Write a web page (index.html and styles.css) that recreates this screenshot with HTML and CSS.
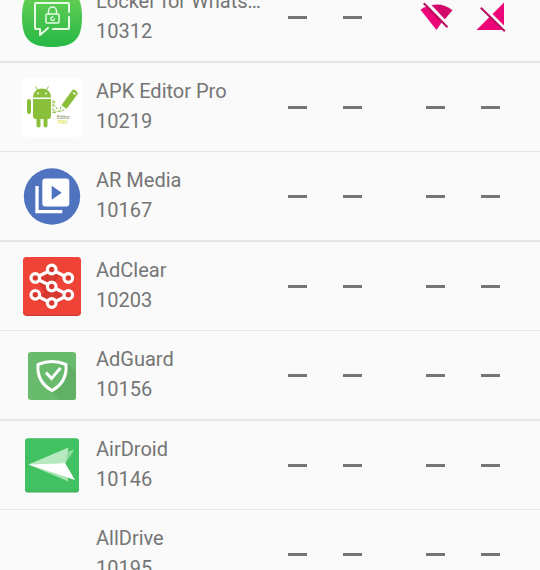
FILE: index.html
```
<!DOCTYPE html>
<html lang="en">
<head>
    <meta charset="UTF-8">
    <meta name="viewport" content="width=device-width, initial-scale=1.0">
    <title>Apps</title>
    <link rel="stylesheet" href="styles.css">
</head>
<body>
    <ul class="app-list">
        <li class="app">
            <svg class="app-icon" viewBox="0 0 60 60" aria-hidden="true">
                <defs>
                    <linearGradient id="lockerGreen" x1="0" y1="0" x2="0" y2="1">
                        <stop offset="0" stop-color="#6fd257"/>
                        <stop offset="1" stop-color="#25b845"/>
                    </linearGradient>
                </defs>
                <path d="M30 0C52 0 60 8 60 30S52 60 30 60 0 52 0 30 8 0 30 0z" fill="url(#lockerGreen)"/>
                <g fill="none" stroke="#e6fbe4" stroke-width="2" stroke-linecap="round" stroke-linejoin="round">
                    <path d="M47 25V17q0-1-1-1H14q-1 0-1 1V41q0 1 1 1H18V48L26 41M31 42H46q1 0 1-1V30"/>
                    <rect x="24" y="27" width="13" height="9" rx="1" stroke-width="1.5"/>
                    <path d="M26.500 27V24a4 4 0 0 1 8 0V27" stroke-width="1.500"/>
                    <path d="M31 30a1.800 1.800 0 1 0 1.500 2" stroke-width="1.300"/>
                </g>
            </svg>
            <div class="app-info">
                <div class="app-name">Locker for Whats…</div>
                <div>10312</div>
            </div>
            <div class="rules">
                <button type="button" aria-label="LAN"><span class="dash"></span></button>
                <button type="button" aria-label="Roaming"><span class="dash"></span></button>
            </div>
            <div class="rules">
                <button type="button" aria-label="Wi-Fi blocked">
                    <svg class="blocked" viewBox="0 0 36 36">
                        <path d="M2.500 10.700Q5 8.500 9 7.500L24 23 18.500 31z"/>
                        <path d="M13.500 6Q25 3.500 34.500 11.300L26.800 20.300z" class="shade"/>
                        <path d="M5.800 4.300L29.500 28.300" class="slash"/>
                    </svg>
                </button>
                <button type="button" aria-label="Mobile data blocked">
                    <svg class="blocked" viewBox="0 0 36 36">
                        <path d="M3.500 31L16.500 18 29.500 31z"/>
                        <path d="M31 3.500V26.500L19.500 15z"/>
                        <path d="M7.800 8.700L31.800 32.300" class="slash"/>
                    </svg>
                </button>
            </div>
        </li>

        <li class="app">
            <svg class="app-icon" viewBox="0 0 60 60" aria-hidden="true">
                <rect x="0" y="1" width="60" height="59" rx="5" fill="#fff"/>
                <g fill="#8abf3c">
                    <path d="M11 20.500C11 8.500 29 8.500 29 20.500z"/>
                    <path d="M13.500 9.500L16 13.500M26.500 9.500L24 13.500" stroke="#8abf3c" stroke-width="1"/>
                    <path d="M11 22H29V39q0 3-3 3H14q-3 0-3-3z"/>
                    <rect x="5" y="22" width="4" height="15" rx="2"/>
                    <path d="M14.500 40H18.500V48.500a2 2 0 0 1-4 0zM21.500 40H25.500V48.500a2 2 0 0 1-4 0z"/>
                    <path d="M39.500 28L50 13.500Q51.500 11.800 53.300 13.200L55 14.700Q56.500 16 55.200 17.700L44.500 32z"/>
                </g>
                <path d="M51 15.500L53.500 17.500" stroke="#fff" stroke-width="1.500"/>
                <path d="M31 23V36M33 24L31.500 28 35 31 31 36 37 34M39 29.500L37.500 35 42.500 32.500" fill="none" stroke="#8abf3c" stroke-width="1" stroke-dasharray="3 1"/>
                <circle cx="16" cy="16.500" r="0.900" fill="#fff"/>
                <circle cx="24" cy="16.500" r="0.900" fill="#fff"/>
                <g font-family="Roboto, sans-serif" font-size="5">
                    <text x="35" y="42" fill="#7d8a5c">Editor</text>
                    <text x="36" y="47" fill="#d8e02c">PRO</text>
                </g>
            </svg>
            <div class="app-info">
                <div class="app-name">APK Editor Pro</div>
                <div>10219</div>
            </div>
            <div class="rules">
                <button type="button" aria-label="LAN"><span class="dash"></span></button>
                <button type="button" aria-label="Roaming"><span class="dash"></span></button>
            </div>
            <div class="rules">
                <button type="button" aria-label="Wi-Fi"><span class="dash"></span></button>
                <button type="button" aria-label="Mobile data"><span class="dash"></span></button>
            </div>
        </li>

        <li class="app">
            <svg class="app-icon" viewBox="0 0 60 60" aria-hidden="true">
                <circle cx="30" cy="30.500" r="28.200" fill="#4f73bf"/>
                <path d="M15 20V45.700H40.300" fill="none" stroke="#fff" stroke-width="3.300"/>
                <rect x="20.300" y="12.500" width="27" height="28" rx="3" fill="#fff"/>
                <path d="M29.700 19.700V33.700L39.700 26.700z" fill="#4f73bf"/>
            </svg>
            <div class="app-info">
                <div class="app-name">AR Media</div>
                <div>10167</div>
            </div>
            <div class="rules">
                <button type="button" aria-label="LAN"><span class="dash"></span></button>
                <button type="button" aria-label="Roaming"><span class="dash"></span></button>
            </div>
            <div class="rules">
                <button type="button" aria-label="Wi-Fi"><span class="dash"></span></button>
                <button type="button" aria-label="Mobile data"><span class="dash"></span></button>
            </div>
        </li>

        <li class="app">
            <svg class="app-icon" viewBox="0 0 60 60" aria-hidden="true">
                <rect x="1" y="1" width="58" height="59" rx="4" fill="#c9362e"/>
                <rect x="1" y="1" width="58" height="58" rx="4" fill="#f04338"/>
                <path d="M16 25L30 13.500 37 20 30 31 46 39 36 48 30 51 14 43 22 36z" fill="#c5332b" opacity="0.600"/>
                <g fill="none" stroke="#fff" stroke-width="3.200">
                    <path d="M17 20L26 15.500M33.500 15.500L42.500 20M17 24L26 28.500M33.500 32.500L42.500 37M17 41L26 45.500M33.500 45.500L42.500 41"/>
                    <g fill="#d83a31">
                        <circle cx="29.700" cy="13.500" r="4.300"/>
                        <circle cx="13.300" cy="22" r="4.300"/>
                        <circle cx="46.300" cy="22" r="4.300"/>
                        <circle cx="29.700" cy="30.500" r="4.300"/>
                        <circle cx="13.300" cy="38.800" r="4.300"/>
                        <circle cx="46.300" cy="38.800" r="4.300"/>
                        <circle cx="29.700" cy="47" r="4.300"/>
                    </g>
                </g>
            </svg>
            <div class="app-info">
                <div class="app-name">AdClear</div>
                <div>10203</div>
            </div>
            <div class="rules">
                <button type="button" aria-label="LAN"><span class="dash"></span></button>
                <button type="button" aria-label="Roaming"><span class="dash"></span></button>
            </div>
            <div class="rules">
                <button type="button" aria-label="Wi-Fi"><span class="dash"></span></button>
                <button type="button" aria-label="Mobile data"><span class="dash"></span></button>
            </div>
        </li>

        <li class="app">
            <svg class="app-icon" viewBox="0 0 60 60" aria-hidden="true">
                <rect x="6" y="7" width="48" height="48" rx="3" fill="#68ba6c"/>
                <path d="M45 18L54 27V52q0 3-3 3H38L30 46z" fill="#62b066"/>
                <path d="M30 16.500Q37 16.500 44 19.500C45 32 40 40 30 45.500 20 40 15 32 16 19.500Q23 16.500 30 16.500z" fill="#68ba6c" stroke="#fff" stroke-width="3" stroke-linejoin="round"/>
                <path d="M24 27.500L29.500 33.500 38.500 23" fill="none" stroke="#fff" stroke-width="3"/>
            </svg>
            <div class="app-info">
                <div class="app-name">AdGuard</div>
                <div>10156</div>
            </div>
            <div class="rules">
                <button type="button" aria-label="LAN"><span class="dash"></span></button>
                <button type="button" aria-label="Roaming"><span class="dash"></span></button>
            </div>
            <div class="rules">
                <button type="button" aria-label="Wi-Fi"><span class="dash"></span></button>
                <button type="button" aria-label="Mobile data"><span class="dash"></span></button>
            </div>
        </li>

        <li class="app">
            <svg class="app-icon" viewBox="0 0 60 60" aria-hidden="true">
                <rect x="3" y="3.500" width="54" height="54" rx="3" fill="#36a653"/>
                <rect x="3" y="3.500" width="54" height="53" rx="3" fill="#41c162"/>
                <path d="M6.300 29.500L52.500 14.500 43.500 28z" fill="#8ddc9d"/>
                <path d="M6.300 29.500L46.500 12.500 43.500 28z" fill="#b7e9c1"/>
                <path d="M6.300 29.500L46.500 46.500 43.500 29z" fill="#a5e3b1"/>
                <path d="M6.300 29.500L43 28 53 45z" fill="#fff"/>
            </svg>
            <div class="app-info">
                <div class="app-name">AirDroid</div>
                <div>10146</div>
            </div>
            <div class="rules">
                <button type="button" aria-label="LAN"><span class="dash"></span></button>
                <button type="button" aria-label="Roaming"><span class="dash"></span></button>
            </div>
            <div class="rules">
                <button type="button" aria-label="Wi-Fi"><span class="dash"></span></button>
                <button type="button" aria-label="Mobile data"><span class="dash"></span></button>
            </div>
        </li>

        <li class="app">
            <div class="app-icon"></div>
            <div class="app-info">
                <div class="app-name">AllDrive</div>
                <div>10195</div>
            </div>
            <div class="rules">
                <button type="button" aria-label="LAN"><span class="dash"></span></button>
                <button type="button" aria-label="Roaming"><span class="dash"></span></button>
            </div>
            <div class="rules">
                <button type="button" aria-label="Wi-Fi"><span class="dash"></span></button>
                <button type="button" aria-label="Mobile data"><span class="dash"></span></button>
            </div>
        </li>
    </ul>
</body>
</html>
```
FILE: styles.css
```
* {
    box-sizing: border-box;
}
body {
    margin: 0;
    height: 100vh;
    overflow: hidden;
    background-color: #fafafa;
    color: #757575;
    font-family: Roboto, sans-serif;
    font-size: 20px;
    line-height: 30px;
}
/* list is scrolled part way into its first row */
.app-list {
    list-style: none;
    margin: -27px 0 0;
    padding: 0;
}
.app {
    display: flex;
    align-items: center;
    min-height: 90px;
    padding: 0 22px;
    border-bottom: 2px solid #e6e6e6;
}
.app:nth-child(even) {
    min-height: 89px;
    border-bottom-width: 1px;
}
.app-icon {
    flex: none;
    width: 60px;
    height: 60px;
    margin-right: 14px;
}
.app-info {
    flex: 1;
    min-width: 0;
    padding-bottom: 2px;
}
.app-name {
    white-space: nowrap;
    overflow: hidden;
    text-overflow: ellipsis;
}
.rules {
    display: flex;
    flex: none;
}
.rules + .rules {
    margin-left: 28px;
}
.rules button {
    display: flex;
    align-items: center;
    justify-content: center;
    width: 55px;
    height: 60px;
    padding: 0;
    border: none;
    background: none;
    cursor: pointer;
}
.dash {
    width: 19px;
    height: 3px;
    background-color: #757575;
}
.blocked {
    width: 36px;
    height: 36px;
    fill: #ec0677;
}
.blocked .shade {
    fill: #d20a6b;
}
.blocked .slash {
    stroke: #b80c60;
    stroke-width: 2;
}
```
